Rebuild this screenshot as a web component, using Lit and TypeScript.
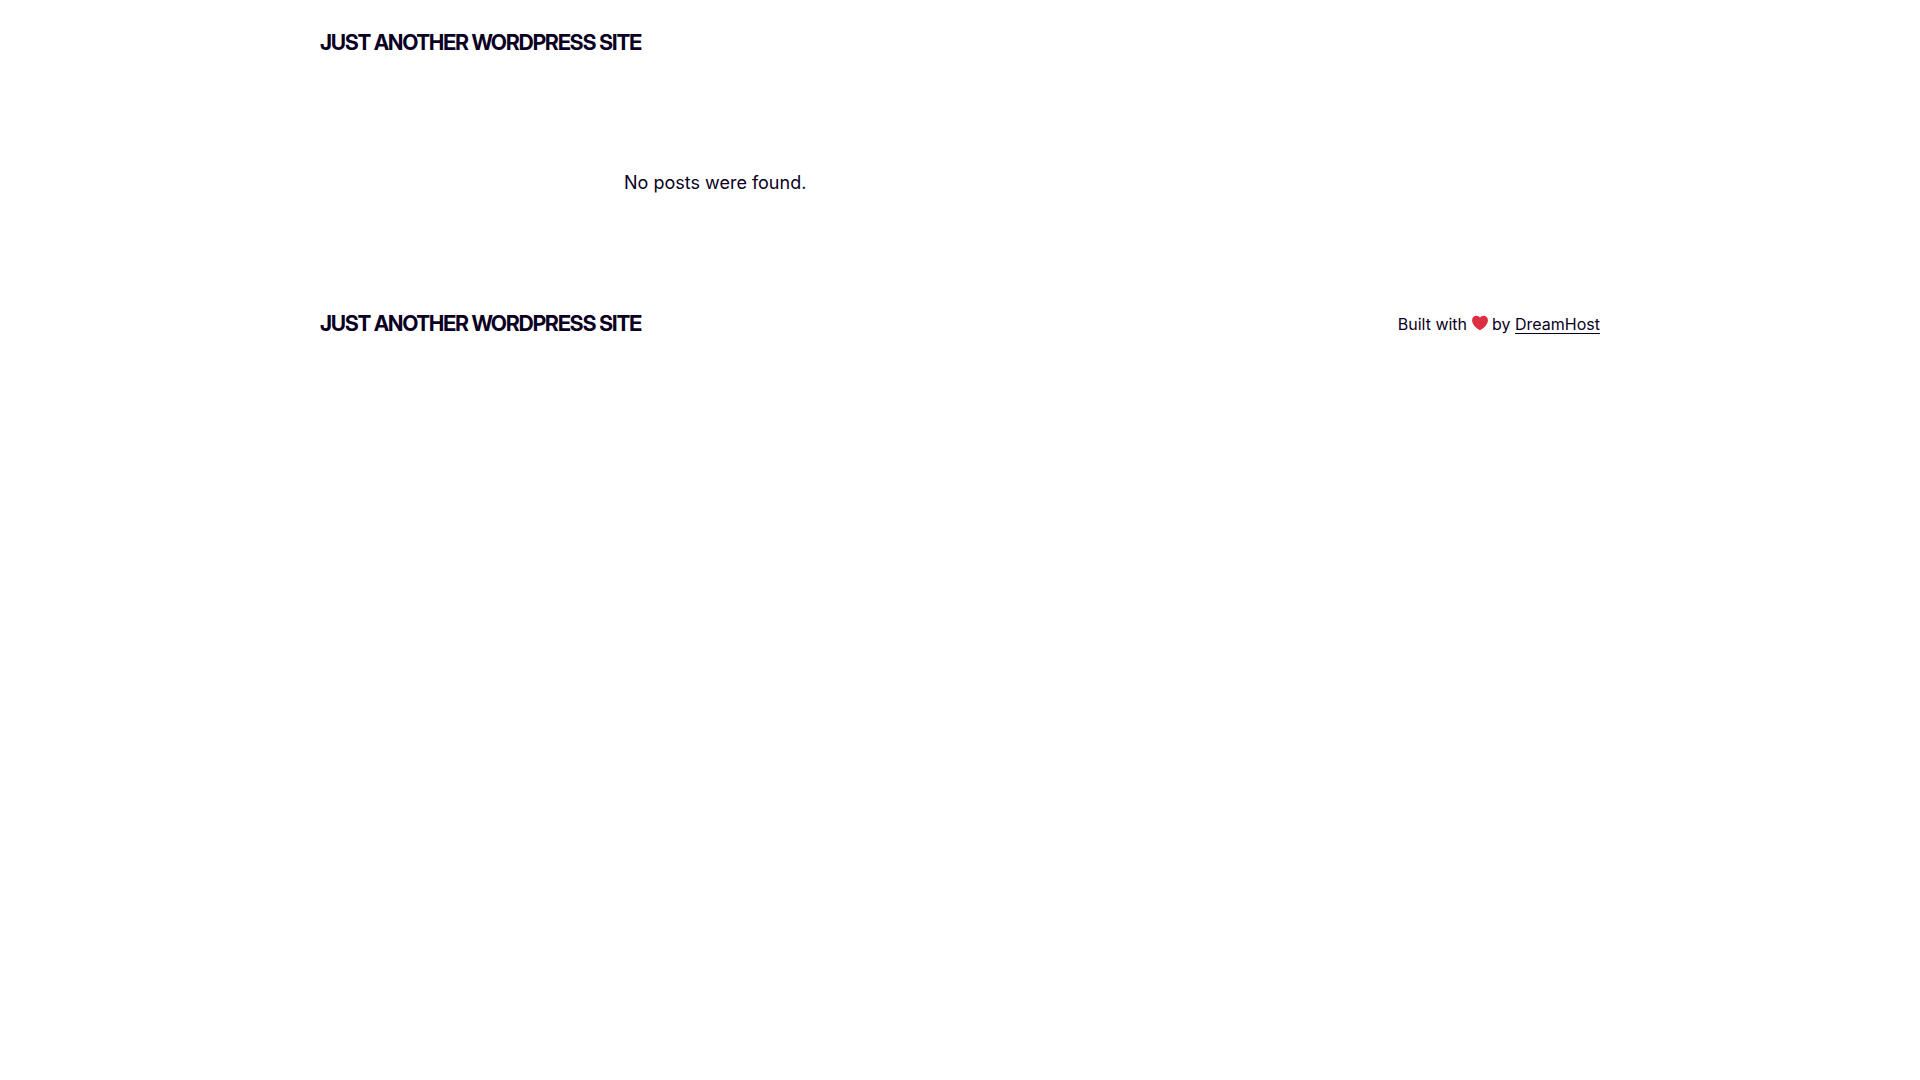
import { LitElement, html, css } from "lit";
import { customElement } from "lit/decorators.js";

@customElement("app-root")
export class AppRoot extends LitElement {
  static styles = css`
    :host {
      display: block;
      font-family: Inter, "Liberation Sans", sans-serif;
      font-size: 18px;
      line-height: 28px;
      color: #0a0023;
    }
    .bar {
      display: flex;
      justify-content: space-between;
      align-items: center;
      max-width: 1280px;
      margin: 0 auto;
      padding: 28px 32px;
    }
    .title {
      margin: 0;
      font-family: "Inter Display", Inter, "Liberation Sans", sans-serif;
      font-size: 21px;
      line-height: 30px;
      font-weight: 700;
      letter-spacing: -0.04em;
      text-transform: uppercase;
    }
    .title a {
      color: inherit;
      text-decoration: none;
    }
    .main {
      max-width: 672px;
      margin: 0 auto;
      padding: 83px 32px 84px;
    }
    .text {
      margin: 0;
    }
    .credit {
      margin: 0;
      font-size: 16px;
    }
    .credit a {
      color: inherit;
      text-decoration-thickness: 1px;
      text-underline-offset: 3px;
    }
    .heart {
      width: 16px;
      height: 16px;
      vertical-align: -1px;
    }
  `;

  render() {
    return html`
      <header class="bar">
        <p class="title"><a href="#">Just another WordPress site</a></p>
      </header>
      <main class="main"><p class="text">No posts were found.</p></main>
      <footer class="bar">
        <p class="title"><a href="#">Just another WordPress site</a></p>
        <p class="credit">
          Built with
          <svg class="heart" viewBox="0 0 36 36" role="img" aria-label="love">
            <path fill="#DD2E44" d="M35.885 11.833c0-5.45-4.418-9.868-9.867-9.868-3.308 0-6.227 1.633-8.018 4.129-1.791-2.496-4.71-4.129-8.017-4.129-5.45 0-9.868 4.417-9.868 9.868 0 .772.098 1.52.266 2.241C1.751 22.587 11.216 31.568 18 34.034c6.783-2.466 16.249-11.447 17.617-19.959.17-.721.268-1.469.268-2.242z"/>
          </svg>
          by <a href="#">DreamHost</a>
        </p>
      </footer>
    `;
  }
}
